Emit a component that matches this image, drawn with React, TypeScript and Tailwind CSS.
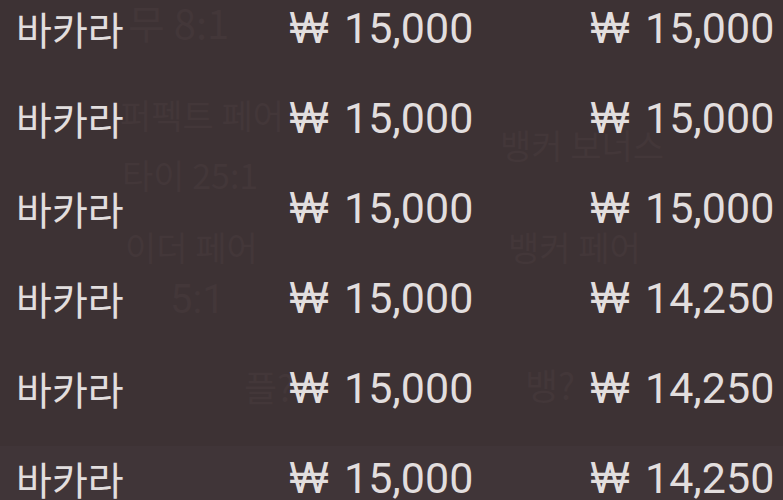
import React from "react";

const rows = [
  { game: "바카라", bet: "15,000", payout: "15,000" },
  { game: "바카라", bet: "15,000", payout: "15,000" },
  { game: "바카라", bet: "15,000", payout: "15,000" },
  { game: "바카라", bet: "15,000", payout: "14,250" },
  { game: "바카라", bet: "15,000", payout: "14,250" },
  { game: "바카라", bet: "15,000", payout: "14,250" },
];

const ko = { fontFamily: '"Noto Sans CJK KR", "Noto Sans", sans-serif' };
const num = { fontFamily: 'Roboto, "Noto Sans CJK KR", sans-serif' };
const won = { fontFamily: 'Inter, "Noto Sans CJK KR", sans-serif' };

// faint table labels showing through the dimmed backdrop
const BackdropLabels = () => (
  <div className="absolute inset-0 pointer-events-none text-[#433739]" style={ko}>
    <span className="absolute left-[128px] top-[2px] text-[40px] leading-none">무 8:1</span>
    <span className="absolute left-[120px] top-[98px] text-[34px] leading-none">퍼펙트 페어</span>
    <span className="absolute left-[122px] top-[158px] text-[34px] leading-none">타이 25:1</span>
    <span className="absolute left-[500px] top-[128px] text-[34px] leading-none">뱅커 보너스</span>
    <span className="absolute left-[125px] top-[230px] text-[34px] leading-none">이더 페어</span>
    <span className="absolute left-[508px] top-[230px] text-[34px] leading-none">뱅커 페어</span>
    <span className="absolute left-[170px] top-[280px] text-[40px] leading-none" style={num}>5:1</span>
    <span className="absolute left-[244px] top-[368px] text-[36px] leading-none">플?</span>
    <span className="absolute left-[525px] top-[366px] text-[36px] leading-none">뱅?</span>
  </div>
);

const Amount = ({ value }: { value: string }) => (
  <span className="flex items-baseline leading-none">
    <span className="text-[42px] w-[55px]" style={won}>₩</span>
    <span className="text-[43px]" style={num}>{value}</span>
  </span>
);

export default function App() {
  return (
    <div className="relative w-[783px] h-[500px] overflow-hidden bg-[#3d3234]">
      <div className="absolute left-0 right-0 top-[446px] bottom-0 bg-[#403538]" />
      <BackdropLabels />
      <div className="relative -mt-[17px] flex flex-col">
        {rows.map((r, i) => (
          <div
            key={i}
            className="h-[90px] grid grid-cols-[273px_301px_1fr] items-center pl-4 text-[#e2dede]"
          >
            <span className="text-[39px] leading-none" style={ko}>{r.game}</span>
            <Amount value={r.bet} />
            <Amount value={r.payout} />
          </div>
        ))}
      </div>
    </div>
  );
}
